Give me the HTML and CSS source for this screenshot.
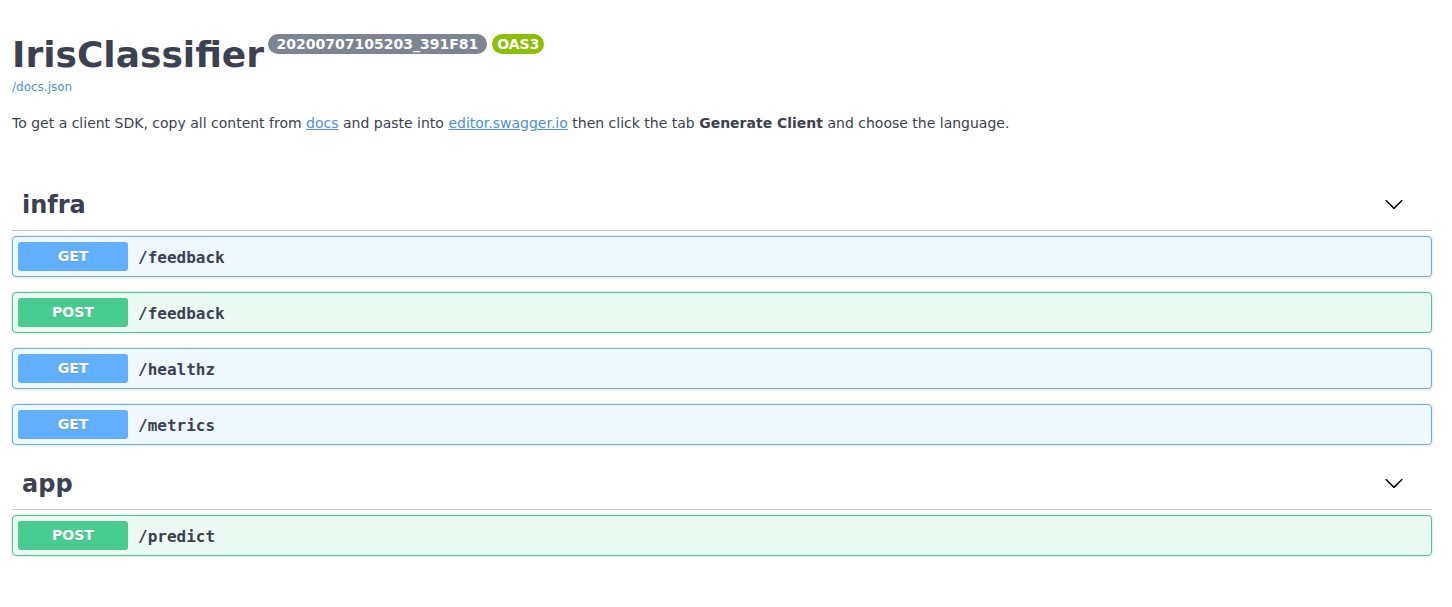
FILE: index.html
```html
<!DOCTYPE html>
<html lang="en">
<head>
<meta charset="utf-8">
<title>IrisClassifier</title>
<link rel="stylesheet" href="styles.css">
</head>
<body>
<div class="wrapper">
  <section class="info">
    <hgroup class="main">
      <h2 class="title">IrisClassifier <span class="badges"><small class="badge badge-version"><pre class="version">20200707105203_391F81</pre></small><small class="badge badge-stamp"><pre class="version">OAS3</pre></small></span></h2>
      <a class="docs-url" href="#">/docs.json</a>
    </hgroup>
    <p class="description">To get a client SDK, copy all content from <a href="#">docs</a> and paste into <a href="#">editor.swagger.io</a> then click the tab <strong>Generate Client</strong> and choose the language.</p>
  </section>

  <section class="tag-section">
    <h3 class="opblock-tag">
      <span class="tag-name">infra</span>
      <button class="expand" aria-label="collapse">
        <svg width="20" height="20" viewBox="0 0 20 20"><path d="M17.418 6.109c.272-.268.709-.268.979 0s.271.701 0 .969l-7.908 7.83c-.27.268-.707.268-.979 0l-7.908-7.830c-.27-.268-.27-.701 0-.969.271-.268.709-.268.979 0L10 13.25l7.418-7.141z" fill="#000"/></svg>
      </button>
    </h3>
    <div class="ops">
      <div class="opblock opblock-get"><span class="method">GET</span><span class="path">/feedback</span></div>
      <div class="opblock opblock-post"><span class="method">POST</span><span class="path">/feedback</span></div>
      <div class="opblock opblock-get"><span class="method">GET</span><span class="path">/healthz</span></div>
      <div class="opblock opblock-get"><span class="method">GET</span><span class="path">/metrics</span></div>
    </div>
  </section>

  <section class="tag-section">
    <h3 class="opblock-tag">
      <span class="tag-name">app</span>
      <button class="expand" aria-label="collapse">
        <svg width="20" height="20" viewBox="0 0 20 20"><path d="M17.418 6.109c.272-.268.709-.268.979 0s.271.701 0 .969l-7.908 7.83c-.27.268-.707.268-.979 0l-7.908-7.830c-.27-.268-.27-.701 0-.969.271-.268.709-.268.979 0L10 13.25l7.418-7.141z" fill="#000"/></svg>
      </button>
    </h3>
    <div class="ops">
      <div class="opblock opblock-post"><span class="method">POST</span><span class="path">/predict</span></div>
    </div>
  </section>
</div>
</body>
</html>
```

FILE: styles.css
```css
html, body {
  margin: 0;
  padding: 0;
  background: #fff;
  font-family: "DejaVu Sans", sans-serif;
  color: #3b4151;
}

.wrapper {
  padding: 0 20px 0 12px;
}

.info {
  padding-top: 34px;
  margin-bottom: 50px;
}

.main {
  margin: 0;
}

.title {
  margin: 0;
  font-size: 36px;
  font-weight: bold;
  line-height: normal;
  color: #3b4151;
}

.badges {
  display: inline-flex;
  gap: 5px;
  vertical-align: top;
  margin-left: -9px;
}

.badge {
  display: inline-block;
  border-radius: 57px;
  padding: 2px 9px;
  background: #7d8492;
}

.badge-stamp {
  background: #89bf04;
  padding: 2px 5px;
}

.version {
  margin: 0;
  padding: 0;
  font-family: "DejaVu Sans", sans-serif;
  font-size: 14px;
  font-weight: bold;
  color: #fff;
}

.docs-url {
  display: block;
  margin-top: 5px;
  font-size: 12px;
  line-height: 14px;
  color: #4990e2;
  text-decoration: none;
}

.description {
  margin: 21px 0 0;
  font-size: 14px;
  line-height: normal;
}

.description a {
  color: #4990e2;
}

.tag-section {
  display: flex;
  flex-direction: column;
}

.opblock-tag {
  display: flex;
  align-items: center;
  margin: 0 0 5px;
  padding: 10px 20px 10px 10px;
  border-bottom: 1px solid rgba(59, 65, 81, 0.3);
  font-size: 24px;
  font-weight: bold;
  line-height: 29px;
  color: #3b4151;
}

.tag-name {
  flex: 1;
}

.expand {
  align-self: flex-start;
  border: none;
  background: none;
  padding: 3px 8px 0;
  margin: 0;
  cursor: pointer;
}

.expand svg {
  display: block;
}

.ops {
  display: flex;
  flex-direction: column;
  gap: 15px;
  margin-bottom: 15px;
}

.opblock {
  display: flex;
  align-items: center;
  padding: 5px;
  border: 1px solid #000;
  border-radius: 4px;
  box-shadow: 0 0 3px rgba(0, 0, 0, 0.19);
}

.opblock-get {
  border-color: #61affe;
  background: rgba(97, 175, 254, 0.1);
}

.opblock-post {
  border-color: #49cc90;
  background: rgba(73, 204, 144, 0.1);
}

.method {
  min-width: 80px;
  padding: 6px 15px;
  border-radius: 3px;
  font-size: 14px;
  font-weight: bold;
  line-height: 17px;
  text-align: center;
  color: #fff;
  text-shadow: 0 1px 0 rgba(0, 0, 0, 0.1);
}

.opblock-get .method {
  background: #61affe;
}

.opblock-post .method {
  background: #49cc90;
}

.path {
  padding: 2px 10px 0;
  font-family: "DejaVu Sans Mono", monospace;
  font-size: 16px;
  font-weight: bold;
  color: #3b4151;
}
```
